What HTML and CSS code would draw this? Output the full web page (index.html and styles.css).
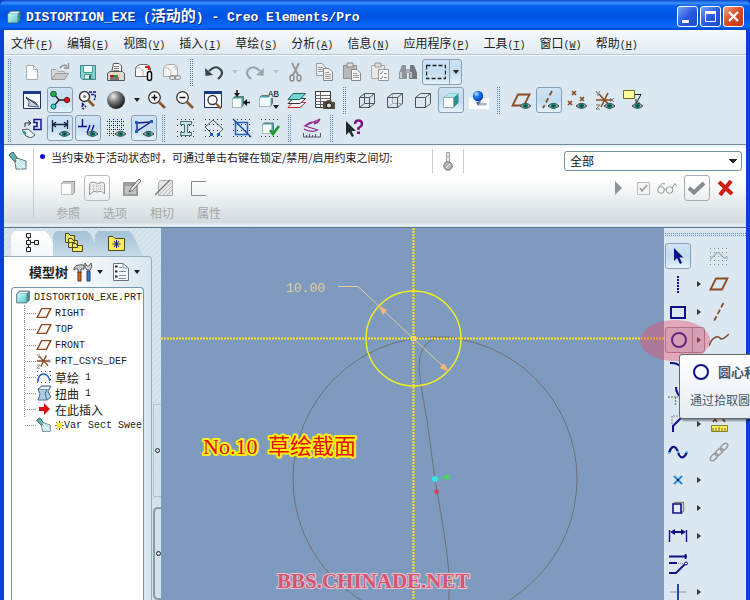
FILE: index.html
```html
<!DOCTYPE html>
<html lang="zh-CN">
<head>
    <meta charset="UTF-8">
    <meta name="viewport" content="width=device-width, initial-scale=1.0">
    <title>DISTORTION_EXE (活动的) - Creo Elements/Pro</title>
    <link rel="stylesheet" href="styles.css">
</head>
<body>
    <!-- shared shapes -->
    <svg class="defs" width="0" height="0" aria-hidden="true">
        <defs>
            <linearGradient id="cubeFace" x1="0" y1="0" x2="1" y2="1"><stop offset="0" stop-color="#c8fffb"/><stop offset="1" stop-color="#5cc4c4"/></linearGradient>
            <radialGradient id="ballGray" cx=".35" cy=".3" r=".75"><stop offset="0" stop-color="#eee"/><stop offset=".45" stop-color="#777"/><stop offset="1" stop-color="#111"/></radialGradient>
            <radialGradient id="ballBlue" cx=".35" cy=".3" r=".75"><stop offset="0" stop-color="#bfe4ff"/><stop offset=".4" stop-color="#1a78f0"/><stop offset="1" stop-color="#0036a8"/></radialGradient>
            <symbol id="eye" viewBox="0 0 12 8"><path d="M0 4Q6 -2 12 4Q6 9 0 4Z" fill="#9fb5b5" stroke="#334"/><circle cx="6" cy="4" r="3" fill="#14806e"/><circle cx="6" cy="4" r="1.2" fill="#023"/></symbol>
            <symbol id="plane" viewBox="0 0 20 20"><path d="M7 4.500H18.500L13 15.500H1.500Z" fill="none" stroke="#8b4a22" stroke-width="1.800"/></symbol>
            <symbol id="cube" viewBox="0 0 20 20"><path d="M1 5.500L5 1.500H19V14.500L15 18.500H1Z" fill="#3f8f95"/><path d="M2 5L5.500 2H18.500L15 5Z" fill="#eafffd"/><path d="M1 5.500H15V18.500H1Z" fill="url(#cubeFace)"/><path d="M1 5.500L5 1.500H19V14.500L15 18.500H1Z" fill="none" stroke="#456"/></symbol>
            <symbol id="axis" viewBox="0 0 20 20"><path d="M14.500 1L5 19" stroke="#8b4a22" stroke-width="1.800" stroke-dasharray="5 2.500"/></symbol>
            <symbol id="csys" viewBox="0 0 20 20"><path d="M1 10H17M4 4L15 16M13 3L6 17" stroke="#8b4a22" stroke-width="1.600"/><path d="M1 1L3 4L5 1M3 4V6M15 8L19 12M19 8L15 12M1 15H5L1 19H5" fill="none" stroke="#777"/></symbol>
            <symbol id="sweep" viewBox="0 0 20 20"><path d="M1 4L5 1L9 7L18 10V18H8L7 11Z" fill="#c4ecec" stroke="#678"/><path d="M1 4L5 1L9 7L7 11Z" fill="#62b5b5" stroke="#466"/><path d="M8 8L17 17M8 12L13 18" stroke="#fff"/></symbol>
        </defs>
    </svg>

    <header class="titlebar">
        <svg width="14" height="14"><use href="#cube"/></svg>
        <h1>DISTORTION_EXE (<span class="cn">活动的</span>) - Creo Elements/Pro</h1>
        <div class="window-buttons">
            <button type="button" class="wbtn" aria-label="最小化"><svg width="19" height="19"><path d="M4 13H11V16H4Z" fill="#fff"/></svg></button>
            <button type="button" class="wbtn" aria-label="最大化"><svg width="19" height="19"><path d="M4.500 5.500H14.500V14.500H4.500Z" fill="none" stroke="#fff"/><path d="M4 4H15V7H4Z" fill="#fff"/></svg></button>
            <button type="button" class="wbtn close" aria-label="关闭"><svg width="19" height="19"><path d="M5 5L14 14M14 5L5 14" stroke="#fff" stroke-width="2.400"/></svg></button>
        </div>
    </header>

    <div class="frame">
        <nav class="menu">
            <a href="#">文件<span>(<u>F</u>)</span></a>
            <a href="#">编辑<span>(<u>E</u>)</span></a>
            <a href="#">视图<span>(<u>V</u>)</span></a>
            <a href="#">插入<span>(<u>I</u>)</span></a>
            <a href="#">草绘<span>(<u>S</u>)</span></a>
            <a href="#">分析<span>(<u>A</u>)</span></a>
            <a href="#">信息<span>(<u>N</u>)</span></a>
            <a href="#">应用程序<span>(<u>P</u>)</span></a>
            <a href="#">工具<span>(<u>T</u>)</span></a>
            <a href="#">窗口<span>(<u>W</u>)</span></a>
            <a href="#">帮助<span>(<u>H</u>)</span></a>
        </nav>

        <div class="toolbars">
            <div class="bar">
                <i class="grip"></i>
                <button type="button" class="tool" aria-label="新建"><svg width="20" height="20"><path d="M4.500 3.500H11.500L15.500 7.500V17.500H4.500Z" fill="#fafafa" stroke="#a9b0b5"/><path d="M11.500 3.500V7.500H15.500" fill="none" stroke="#a9b0b5"/></svg></button>
                <button type="button" class="tool" aria-label="打开"><svg width="20" height="20"><path d="M1.500 17V7.500H6L8 9.500H14.500V11" fill="#dadada" stroke="#a5a5a5"/><path d="M1.500 17.500L5.500 11.500H18.500L14.500 17.500Z" fill="#c9c9c9" stroke="#999"/><path d="M10 6Q13 2 17 4M18.500 1V6H14" fill="none" stroke="#8d8d8d" stroke-width="1.400"/></svg></button>
                <button type="button" class="tool" aria-label="保存"><svg width="20" height="20"><path d="M2.500 3.500H17.500V17.500H4.500L2.500 15.500Z" fill="#7fd8d2" stroke="#3e8587"/><path d="M5.500 4V10.500H14.500V4" fill="#f4fdfd" stroke="#4d9696"/><path d="M6.500 12.500H14V17H6.500Z" fill="#e4f4f4" stroke="#4d9696"/><path d="M11 13H13V17H11Z" fill="#2b6666"/></svg></button>
                <button type="button" class="tool" aria-label="打印"><svg width="20" height="20"><path d="M7.500 1.500H13L15.500 4V11H5.500Z" fill="#fff" stroke="#555"/><path d="M8 4.500H13M8 6.500H13M7.500 8.500H13" stroke="#777"/><path d="M1.500 11.500L4 9.500H16.500L18.500 11.500V18.500H1.500Z" fill="#dedbcc" stroke="#555"/><path d="M4 15H13V18H4Z" fill="#777"/><path d="M4 14H8" stroke="#d01515" stroke-width="2"/><path d="M8 14H12" stroke="#2a9a2a" stroke-width="2"/></svg></button>
                <button type="button" class="tool" aria-label="发送"><svg width="20" height="20"><path d="M1.500 14.500V7Q2 2.500 8 2.500H12Q16.500 3 16.500 8V14.500Z" fill="#f7f7f7" stroke="#666"/><path d="M1.500 7.500Q6 3 9 9.500V14" fill="none" stroke="#bbb"/><path d="M11 5H15V8" fill="none" stroke="#d02020" stroke-width="2"/><rect x="13.500" y="9.500" width="4" height="9" rx="2" fill="#fff" stroke="#000" stroke-width="1.500"/></svg></button>
                <button type="button" class="tool" aria-label="发送链接"><svg width="20" height="20"><path d="M1.500 14.500V7Q2 2.500 8 2.500H12Q15.500 3 15.500 8V14.500Z" fill="#f4f4f4" stroke="#aaa"/><path d="M1.500 7.500Q6 3 9 9.500V14M11 5H14V8" fill="none" stroke="#bbb"/><rect x="7.500" y="13.500" width="6" height="4" rx="2" fill="none" stroke="#888"/><rect x="12.500" y="13.500" width="6" height="4" rx="2" fill="none" stroke="#888"/></svg></button>
                <i class="grip"></i>
                <button type="button" class="tool" aria-label="撤销"><svg width="20" height="20"><path d="M5 9Q12 2 17 8Q20 12 14 17" fill="none" stroke="#39434a" stroke-width="2.200"/><path d="M1 6L1.500 14L9 13Z" fill="#39434a"/></svg></button>
                <button type="button" class="drop off" aria-label="撤销列表"></button>
                <button type="button" class="tool" aria-label="重做"><svg width="20" height="20"><path d="M15 9Q8 2 3 8Q0 12 6 17" fill="none" stroke="#9ba4aa" stroke-width="2.200"/><path d="M19 6L18.500 14L11 13Z" fill="#9ba4aa"/></svg></button>
                <button type="button" class="drop off" aria-label="重做列表"></button>
                <button type="button" class="tool" aria-label="剪切"><svg width="20" height="20"><path d="M6 1L12 13M13 1L7 13" stroke="#999" stroke-width="2"/><ellipse cx="6" cy="16" rx="2" ry="3" fill="none" stroke="#888" stroke-width="1.400"/><ellipse cx="13" cy="16" rx="2" ry="3" fill="none" stroke="#888" stroke-width="1.400"/></svg></button>
                <button type="button" class="tool" aria-label="复制"><svg width="20" height="20"><path d="M2.500 1.500H8L11.500 5V13.500H2.500Z" fill="#eee" stroke="#999"/><path d="M4 5.500H9M4 7.500H9M4 9.500H9" stroke="#999"/><path d="M9.500 6.500H15L18.500 10V18.500H9.500Z" fill="#f5f5f5" stroke="#888"/><path d="M11 10.500H15M11 12.500H17M11 14.500H17M11 16.500H17" stroke="#999"/></svg></button>
                <button type="button" class="tool" aria-label="粘贴"><svg width="20" height="20"><path d="M1.500 3.500H14.500V16.500H1.500Z" fill="#b9b9b9" stroke="#8f8f8f"/><path d="M5 1H11V5H5Z" fill="#ddd" stroke="#888"/><path d="M9.500 7.500H15L18.500 11V18.500H9.500Z" fill="#f5f5f5" stroke="#888"/><path d="M11 11.500H15M11 13.500H17M11 15.500H17" stroke="#999"/></svg></button>
                <button type="button" class="tool" aria-label="选择性粘贴"><svg width="20" height="20"><path d="M1.500 3.500H14.500V16.500H1.500Z" fill="#e8e8e8" stroke="#aaa"/><path d="M5 1H11V5H5Z" fill="#ddd" stroke="#999"/><path d="M8.500 7.500H18.500V18.500H8.500Z" fill="#f8f8f8" stroke="#999"/><path d="M10 11L11 12L13 9M10 16L11 17L13 14M14 11.500H17M14 15.500H17" fill="none" stroke="#888"/></svg></button>
                <button type="button" class="tool" aria-label="查找"><svg width="20" height="20"><path d="M4 3H8V7L9 9V17H1V11Z" fill="#8e9498"/><path d="M16 3H12V7L11 9V17H19V11Z" fill="#72787c"/><path d="M8 7H12V11H8Z" fill="#aab"/><path d="M3 10V16M13 10V16" stroke="#d8dcdf" stroke-width="1.500"/></svg></button>
                <span class="split pressed"><button type="button" class="tool" aria-label="框选"><svg width="20" height="20"><path d="M.5 3.500H19.500V16.500H.5Z" fill="none" stroke="#222" stroke-width="1.300" stroke-dasharray="4 2"/></svg></button><button type="button" class="drop" aria-label="选择方式"></button></span>
            </div>

            <div class="bar">
                <i class="grip"></i>
                <button type="button" class="tool" aria-label="草绘视图"><svg width="20" height="20"><path d="M1.500 1.500H18.500V18.500H1.500Z" fill="#f2fafd" stroke="#1c2f66"/><path d="M1 1H19V4H1Z" fill="#1b3a86"/><path d="M4 8L13 12L17 17L6 16Q9 12 4 8" fill="#b9dcec" stroke="#557"/><path d="M4 7L15 15" stroke="#223"/></svg></button>
                <button type="button" class="tool pressed" aria-label="旋转中心"><svg width="20" height="20"><path d="M4 4L9 10L4 16M9 10H16" fill="none" stroke="#222" stroke-width="1.300"/><circle cx="3.500" cy="4" r="2.800" fill="#1fae3c" stroke="#154"/><circle cx="3.500" cy="16.500" r="2.500" fill="#35d4d8" stroke="#155"/><circle cx="17" cy="10" r="2.600" fill="#e01818" stroke="#611"/></svg></button>
                <button type="button" class="tool" aria-label="重定向"><svg width="20" height="20"><circle cx="6.500" cy="6.500" r="5" fill="#fff" stroke="#333" stroke-width="1.400"/><circle cx="6.500" cy="6.500" r="1.500" fill="#777"/><path d="M10 10L16 16" stroke="#8b5a2b" stroke-width="2.600"/><path d="M11 2H18M13 4.500H17Q18 8 16 10M4 13L8 17M5 14Q3 18 6 19" fill="none" stroke="#15158a" stroke-width="1.500" stroke-dasharray="3 1"/></svg></button>
                <button type="button" class="tool" aria-label="外观库"><svg width="20" height="20"><circle cx="10" cy="10" r="9" fill="url(#ballGray)"/></svg></button>
                <button type="button" class="drop" aria-label="外观列表"></button>
                <button type="button" class="tool" aria-label="放大"><svg width="20" height="20"><circle cx="7.500" cy="7.500" r="5.800" fill="#fff" stroke="#333" stroke-width="1.300"/><path d="M7.500 4.500V10.500M4.500 7.500H10.500" stroke="#111" stroke-width="1.500"/><path d="M12 12L18 18" stroke="#8b5a2b" stroke-width="2.600"/></svg></button>
                <button type="button" class="tool" aria-label="缩小"><svg width="20" height="20"><circle cx="7.500" cy="7.500" r="5.800" fill="#fff" stroke="#333" stroke-width="1.300"/><path d="M4.500 7.500H10.500" stroke="#111" stroke-width="1.500"/><path d="M12 12L18 18" stroke="#8b5a2b" stroke-width="2.600"/></svg></button>
                <button type="button" class="tool" aria-label="重新调整"><svg width="20" height="20"><path d="M1.500 1.500H18.500V17.500H1.500Z" fill="#f6fbfd" stroke="#1c2f66"/><path d="M1 1H19V4H1Z" fill="#1b3a86"/><circle cx="9.500" cy="10" r="4.500" fill="#fff" stroke="#333" stroke-width="1.300"/><path d="M13 13.500L18 18.500" stroke="#8b5a2b" stroke-width="2.200"/></svg></button>
                <button type="button" class="tool" aria-label="定向模式"><svg width="20" height="20"><path d="M1.500 8.500L4 6.500H12.500V15L10.500 17.500H1.500Z" fill="#3fa099" stroke="#677"/><path d="M1.500 8.500H10.500V17.500H1.500Z" fill="#f4fffd"/><path d="M6 0V4M19 12.500H15" stroke="#111" stroke-width="1.500"/><path d="M3 3H9L6 7ZM16 9V16L12 12.500Z" fill="#111"/></svg></button>
                <button type="button" class="tool" aria-label="命名视图"><svg width="20" height="20"><path d="M.5 7.500L3 5.500H13.500V13L11.500 16.500H.5Z" fill="#4aa7a5" stroke="#677"/><path d="M.5 7.500H11.500V16.500H.5Z" fill="#f2fcfc"/><path d="M9 0H20V8H9Z" fill="#dbe8f2"/><text x="9" y="7" class="ab">AB</text><path d="M14 15H20L17 19Z" fill="#222"/></svg></button>
                <button type="button" class="tool" aria-label="层"><svg width="20" height="20"><path d="M6 12.500H18.500L13 17.500H1Z" fill="#fff" stroke="#c22"/><path d="M6 8.500H18.500L13 13.500H1Z" fill="#fff" stroke="#333"/><path d="M6 3.500H18.500L13 9.500H1Z" fill="#6fd6d3" stroke="#265"/></svg></button>
                <button type="button" class="tool" aria-label="视图管理器"><svg width="20" height="20"><path d="M.5 1.500H15.500V17.500H.5Z" fill="#fff" stroke="#333"/><path d="M0 5.500H15M0 8.500H15M0 11.500H15M0 14.500H15M5.500 2V17" stroke="#666"/><path d="M8 12H11L12 10H16L17 12H20V19H8Z" fill="#554b3a"/><circle cx="14" cy="15.500" r="2.600" fill="#ddd" stroke="#111"/></svg></button>
                <i class="grip"></i>
                <button type="button" class="tool" aria-label="线框"><svg width="20" height="20"><path d="M2.500 7.500H12.500V17.500H2.500ZM7.500 3.500H17.500V13.500H7.500ZM2.500 7.500L7.500 3.500M12.500 7.500L17.500 3.500M12.500 17.500L17.500 13.500M2.500 17.500L7.500 13.500" fill="none" stroke="#4f5357"/></svg></button>
                <button type="button" class="tool" aria-label="隐藏线"><svg width="20" height="20"><path d="M7.500 4V13.500H17M2.500 17.500L7.500 13.500" fill="none" stroke="#aaa"/><path d="M2.500 7.500H12.500V17.500H2.500ZM2.500 7.500L7.500 3.500H17.500L12.500 7.500M17.500 3.500V13.500L12.500 17.500" fill="none" stroke="#4f5357"/></svg></button>
                <button type="button" class="tool" aria-label="消隐"><svg width="20" height="20"><path d="M2.500 7.500H12.500V17.500H2.500ZM2.500 7.500L7.500 3.500H17.500L12.500 7.500M17.500 3.500V13.500L12.500 17.500" fill="none" stroke="#4f5357"/></svg></button>
                <button type="button" class="tool pressed" aria-label="着色"><svg width="20" height="20"><path d="M2.500 7.500L7.500 3.500H17.500V13L12.500 17.500H2.500Z" fill="#2d8f92"/><path d="M3 7.500L7.500 3.500H17.500L12.500 7.500Z" fill="#a8ecea"/><path d="M2.500 7.500H12.500V17.500H2.500Z" fill="#fff" stroke="#9ab"/></svg></button>
                <button type="button" class="tool" aria-label="增强的真实感"><svg width="20" height="20"><path d="M0 8H20V19H0Z" fill="#fff"/><ellipse cx="13" cy="14" rx="5" ry="1.500" fill="#aab4c4"/><circle cx="9" cy="6" r="5.200" fill="url(#ballBlue)"/><path d="M7 12L12 11L9 16Z" fill="#5b6f95"/></svg></button>
                <i class="grip"></i>
                <button type="button" class="tool" aria-label="平面显示"><svg width="20" height="20"><use href="#plane" width="20" height="20"/><use href="#eye" x="9" y="12" width="11" height="8"/></svg></button>
                <button type="button" class="tool pressed" aria-label="轴显示"><svg width="20" height="20"><path d="M13 1L4 18" stroke="#8b4a22" stroke-width="1.800" stroke-dasharray="5 3"/><use href="#eye" x="9" y="12" width="11" height="8"/></svg></button>
                <button type="button" class="tool" aria-label="点显示"><svg width="20" height="20"><path d="M5 1L9 5M9 1L5 5M1 11L5 15M5 11L1 15M13 7L17 11M17 7L13 11" stroke="#8b4a22" stroke-width="1.600"/><use href="#eye" x="9" y="12" width="11" height="8"/></svg></button>
                <button type="button" class="tool" aria-label="坐标系显示"><svg width="20" height="20"><use href="#csys" width="20" height="20"/><use href="#eye" x="9" y="12" width="11" height="8"/></svg></button>
                <button type="button" class="tool" aria-label="注释显示"><svg width="20" height="20"><path d="M0.500 .5H11.500V8.500H0.500Z" fill="#ffffa0" stroke="#6d6b20"/><path d="M12 4.500H18L14 12M13 9V13H17" fill="none" stroke="#222"/><use href="#eye" x="9" y="12" width="11" height="8"/></svg></button>
            </div>

            <div class="bar">
                <i class="grip"></i>
                <button type="button" class="tool" aria-label="草绘方向"><svg width="20" height="20"><path d="M12 1.500H19V11.500H12V8.500H15V4.500H12Z" fill="none" stroke="#14148a" stroke-width="1.500"/><path d="M3 9V5H8M6 2.500L9 5L6 7.500" fill="none" stroke="#222"/><path d="M0 12L6 11L13 17L9 20L4 18Z" fill="#e6f6f4" stroke="#555"/><path d="M0 12L4 18V14Z" fill="#28928a"/></svg></button>
                <button type="button" class="tool pressed" aria-label="显示尺寸"><svg width="20" height="20"><path d="M2.500 2V14M17.500 2V11M3 6.500H17M6 4L3 6.500L6 9M14 4L17 6.500L14 9" fill="none" stroke="#14243e" stroke-width="1.300"/><use href="#eye" x="9" y="12" width="11" height="8"/></svg></button>
                <button type="button" class="tool pressed" aria-label="显示约束"><svg width="20" height="20"><path d="M4.500 1V8M0 8.500H9M9 15L12 7M13 15L16 7" fill="none" stroke="#14148a" stroke-width="1.400"/><use href="#eye" x="9" y="12" width="11" height="8"/></svg></button>
                <button type="button" class="tool" aria-label="显示栅格"><svg width="20" height="20"><path d="M1 3.500H18M1 7.500H18M1 11.500H18M1 15.500H10M3.500 1V18M7.500 1V18M11.500 1V13M15.500 1V12" stroke="#14148a" stroke-dasharray="1 1"/><use href="#eye" x="9" y="12" width="11" height="8"/></svg></button>
                <button type="button" class="tool pressed" aria-label="显示顶点"><svg width="20" height="20"><path d="M3 5L17 4L3 13Z" fill="none" stroke="#14148a" stroke-width="1.300"/><path d="M1 3H4V6H1ZM16 2H19V5H16ZM1 12H4V15H1Z" fill="#1f5fbf"/><use href="#eye" x="9" y="12" width="11" height="8"/></svg></button>
                <i class="grip"></i>
                <button type="button" class="tool" aria-label="着色封闭环"><svg width="20" height="20"><path d="M1 1.500H19M1 7.500H19M1 13.500H19M1 18.500H19" stroke="#334" stroke-dasharray="1 3"/><path d="M4.500 3.500H15.500V6.500H11.500V14.500H15.500V17.500H4.500V14.500H8.500V6.500H4.500Z" fill="#c6e8e2" stroke="#567"/></svg></button>
                <button type="button" class="tool" aria-label="加亮开放端"><svg width="20" height="20"><path d="M1 1.500H19M1 6.500H19M1 12.500H19M1 18.500H19" stroke="#334" stroke-dasharray="1 3"/><path d="M7 15L1 9L9 2L19 11L14 16" fill="none" stroke="#556"/><path d="M6 15H9V18H6ZM13 15H16V18H13Z" fill="#1f5fbf"/></svg></button>
                <button type="button" class="tool" aria-label="重叠几何"><svg width="20" height="20"><path d="M1 1.500H19M1 6.500H19M1 12.500H19M1 18.500H19" stroke="#334" stroke-dasharray="1 3"/><path d="M3.500 4.500H15.500V16.500H3.500Z" fill="none" stroke="#1f5fbf" stroke-width="1.500"/><path d="M1 1L19 19" stroke="#1748a8" stroke-width="1.500"/></svg></button>
                <button type="button" class="tool" aria-label="特征要求"><svg width="20" height="20"><path d="M1 1.500H19M1 18.500H19" stroke="#334" stroke-dasharray="1 3"/><path d="M2.500 6.500L4 5H13.500V13L11.500 15.500H2.500Z" fill="#48a6a2" stroke="#677"/><path d="M2.500 6.500H11.500V15.500H2.500Z" fill="#f3fffd"/><path d="M10 12L13 16L19 8" fill="none" stroke="#1a9a28" stroke-width="2.600"/></svg></button>
                <i class="grip"></i>
                <button type="button" class="tool" aria-label="分析"><svg width="20" height="20"><path d="M18 1L3 8L16 12M3 8Q10 2 16 5M2 11Q9 15 16 12M18 1Q16 5 12 6" fill="none" stroke="#92268f" stroke-width="1.300"/><path d="M1.500 15V19H18.500V15M4.500 17V19M7.500 16V19M10.500 17V19M13.500 16V19" fill="none" stroke="#556"/></svg></button>
                <i class="grip"></i>
                <button type="button" class="tool" aria-label="上下文帮助"><svg width="20" height="20"><path d="M2 3V17L5 14L8 19L10 18L7.500 13H12Z" fill="#22282c"/><path d="M11 6Q11 2.500 14.500 2.500Q18 2.500 18 6Q18 8 14.500 10V12" fill="none" stroke="#7b1280" stroke-width="2.400"/><path d="M13 13.500H16V16H13Z" fill="#7b1280"/></svg></button>
            </div>
        </div>

        <section class="dash">
            <div class="dash-icon"><svg width="20" height="20"><use href="#sweep"/></svg></div>
            <div class="dash-main">
                <div class="message-row">
                    <p class="message">当约束处于活动状态时，可通过单击右键在锁定/禁用/启用约束之间切:</p>
                    <div class="gauge"><svg width="12" height="20"><path d="M4.500 1.500H7.500V12H4.500Z" fill="#e4e4e4" stroke="#aaa"/><path d="M4.500 5.500H8" stroke="#aaa"/><circle cx="6" cy="15" r="4.200" fill="#b5b5b5" stroke="#777"/><path d="M4 17L8 13" stroke="#eee"/></svg></div>
                </div>
                <div class="dash-tools">
                    <button type="button" class="tool" aria-label="实体"><svg width="20" height="20"><path d="M3.500 5.500L5.500 3.500H16.500V14.500L14.500 16.500H3.500Z" fill="#ccc" stroke="#999"/><path d="M3.500 5.500H13.500V16.500H3.500Z" fill="#fafafa" stroke="#c4c4c4"/></svg></button>
                    <button type="button" class="tool boxed" aria-label="曲面"><svg width="20" height="20"><path d="M2.500 17V7Q2.500 4 6 4Q11 7 15 4Q17.500 4 17.500 7V16Q15 12 10 14Q6 12 2.500 17Z" fill="#f0f0f0" stroke="#999"/><path d="M3 8H17M3 11H17M6.500 4V13M10 6V14M13.500 5V13" stroke="#bbb" stroke-dasharray="1 1"/></svg></button>
                    <button type="button" class="tool edit" aria-label="编辑截面"><svg width="20" height="20"><path d="M1 4H16V18H1Z" fill="#9c9c9c"/><path d="M3 8H14V16H3Z" fill="#c4c4c4"/><path d="M7 14L9 10L17 1L19 3L11 12Z" fill="#eee" stroke="#666"/></svg></button>
                    <button type="button" class="tool" aria-label="移除材料"><svg width="20" height="20"><path d="M4.500 4.500L6.500 2.500H18.500V17.500H4.500Z" fill="#e5e5e5" stroke="#aaa"/><path d="M5 17L18 4M9 17L18 8M13 17L18 12" stroke="#bbb"/><path d="M1 17L16 2" stroke="#777" stroke-width="1.300"/></svg></button>
                    <button type="button" class="tool thin" aria-label="薄板"><svg width="20" height="20"><path d="M18 3.500H3.500V17.500H18" fill="none" stroke="#8a8a8a"/></svg></button>
                </div>
                <div class="dash-tabs">
                    <button type="button">参照</button>
                    <button type="button">选项</button>
                    <button type="button">相切</button>
                    <button type="button">属性</button>
                </div>
            </div>
            <div class="dash-side">
                <select class="filter" aria-label="过滤器">
                    <option>全部</option>
                </select>
                <div class="confirm">
                    <button type="button" class="play" aria-label="继续"><svg width="9" height="16"><path d="M1 1L8 8L1 15Z" fill="#8c9296"/></svg></button>
                    <button type="button" aria-label="预览开关"><svg width="13" height="13"><path d="M.5 .5H12.500V12.500H.500Z" fill="#f4f4f4" stroke="#bbb"/><path d="M3 6L5 9L10 3" fill="none" stroke="#999" stroke-width="1.500"/></svg></button>
                    <button type="button" aria-label="预览"><svg width="20" height="14"><circle cx="4" cy="9" r="3.300" fill="none" stroke="#999"/><circle cx="12.500" cy="9" r="3.300" fill="none" stroke="#999"/><path d="M7 8H9M2 6Q5 1 8 3M15 7L18 2.500L19.500 5" fill="none" stroke="#999"/></svg></button>
                    <button type="button" class="accept" aria-label="确定"><svg width="18" height="14"><path d="M1 7L6 11.500L16 2" fill="none" stroke="#858b8e" stroke-width="4"/></svg></button>
                    <button type="button" class="cancel" aria-label="取消"><svg width="17" height="16"><path d="M2 2L15 14M14 1L3 15" stroke="#d01c10" stroke-width="4"/></svg></button>
                </div>
            </div>
        </section>

        <main class="work">
            <aside class="side">
                <div class="tabs">
                    <button type="button" class="tab active" aria-label="模型树"><svg width="16" height="20"><path d="M2.500 .5H6.500V4.500H2.500ZM2.500 7.500H6.500V11.500H2.500ZM2.500 14.500H6.500V18.500H2.500ZM10.500 7.500H14.500V11.500H10.500ZM4.500 4.500V7.500M4.500 11.500V14.500M6.500 9.500H10.500" fill="none" stroke="#222"/></svg></button>
                    <button type="button" class="tab" aria-label="文件夹浏览器"><svg width="20" height="20"><path d="M1.500 .5H5L6 2.500H10.500V9.500H1.500ZM4.500 5.500H8L9 7.500H13.500V14.500H4.500ZM8.500 10.500H12L13 12.500H18.500V18.500H8.500Z" fill="#f4e95e" stroke="#4d4a20"/></svg></button>
                    <button type="button" class="tab" aria-label="收藏夹"><svg width="20" height="18"><path d="M2.500 2.500H7L9 4.500H18.500V16.500H2.500Z" fill="#f7ee5e" stroke="#4d4a20"/><path d="M10.500 6V14M6.500 10H14.500M8 7L13 13M13 7L8 13" stroke="#15158a"/></svg></button>
                </div>
                <div class="panel">
                    <div class="panel-head">
                        <h2>模型树</h2>
                        <button type="button" class="head-tool" aria-label="设置"><svg width="20" height="20"><path d="M1 6Q3 2 11 3V7H8V11H5V7Q3 6 1 8Z" fill="#c7ccd0" stroke="#555"/><path d="M5 10H8V19H5Z" fill="#d96a1b" stroke="#6b3410"/><path d="M14 9H17V19H14Z" fill="#3c79bf" stroke="#24406b"/><path d="M12 1Q11 6 14 8H17Q20 5 18 1L16 4L14 4Z" fill="#d8dcdf" stroke="#555"/></svg></button>
                        <button type="button" class="drop" aria-label="设置菜单"></button>
                        <button type="button" class="head-tool" aria-label="显示"><svg width="18" height="20"><path d="M1.500 1.500H11L16.500 6V18.500H1.500Z" fill="#f7fafc" stroke="#6a7479"/><path d="M11 1.500V6H16.500M7 9.500H14M7 13.500H14M7 5.500H10M7 16.500H14" fill="none" stroke="#7894ad"/><path d="M3 4.500H5.500M3 9.500H5.500M3 14.500H5.500" stroke="#222" stroke-width="2"/></svg></button>
                        <button type="button" class="drop" aria-label="显示菜单"></button>
                    </div>
                    <div class="tree">
                        <div class="root"><svg width="14" height="14"><use href="#cube"/></svg>DISTORTION_EXE.PRT</div>
                        <ul>
                            <li><svg width="16" height="16"><use href="#plane"/></svg>RIGHT</li>
                            <li><svg width="16" height="16"><use href="#plane"/></svg>TOP</li>
                            <li><svg width="16" height="16"><use href="#plane"/></svg>FRONT</li>
                            <li><svg width="16" height="16"><use href="#csys"/></svg>PRT_CSYS_DEF</li>
                            <li><svg width="16" height="14"><path d="M1 1.500H15M1 12.500H15M1.500 1V13M14.500 1V13" stroke="#567" stroke-dasharray="1 3"/><path d="M2 12Q2 4 8 4Q12 4 14 11" fill="none" stroke="#1c5fc0" stroke-width="1.500"/></svg><span class="cn">草绘</span>&nbsp;1</li>
                            <li><svg width="16" height="16"><path d="M2 4L6 1H15L12 7L15 12L11 15H2L4 9Z" fill="#a9cfe8" stroke="#4f6a80"/><path d="M2 4H11L9 9L11 15" fill="none" stroke="#4f6a80"/><path d="M3 4L6 2H14L11 4Z" fill="#f4fbff"/></svg><span class="cn">扭曲</span>&nbsp;1</li>
                            <li><svg width="16" height="14"><path d="M3 5H8V1L14 7L8 13V9H3Z" fill="#d01414"/></svg><span class="cn">在此插入</span></li>
                            <li><svg width="16" height="16"><use href="#sweep"/></svg><svg class="star" width="9" height="9"><path d="M4.500 0V9M0 4.500H9M1 1L8 8M8 1L1 8" stroke="#777a10"/><path d="M2 2H7V7H2Z" fill="#ffef20"/></svg>Var Sect Swee</li>
                        </ul>
                    </div>
                </div>
            </aside>

            <div class="sashes">
                <div class="sash"></div>
                <div class="sash deep"></div>
            </div>

            <div class="canvas">
                <svg width="100%" height="100%">
                    <g fill="none" stroke="#6d7076">
                        <circle cx="274" cy="251" r="142"/>
                        <path d="M296 110Q278 107 269 113Q258 120 258 139Q259 155 266 192L274 251L281 292Q288 335 288 352V372"/>
                    </g>
                    <path d="M252.500 0V1000M0 110.500H1000" stroke="#ffe21a" stroke-width="2" stroke-dasharray="2 1"/>
                    <circle cx="252.500" cy="110.500" r="47.500" fill="none" stroke="#f4f01c" stroke-width="1.400"/>
                    <path d="M177 58.500H197L286 142" fill="none" stroke="#e3cd96"/>
                    <path d="M217 77L226 82L222 87ZM288 144L279 140L283 135Z" fill="#efb878"/>
                    <path d="M250.500 108.500H254.500V112.500H250.500Z" fill="none" stroke="#f5ee30"/>
                    <path d="M274 251L286 249" stroke="#3fdc5c"/>
                    <circle cx="274" cy="251" r="3" fill="#34e4ea"/>
                    <circle cx="286" cy="249" r="2.500" fill="#45dc52"/>
                    <circle cx="275.500" cy="263.500" r="2.300" fill="#d1405c"/>
                    <text class="dim" x="125" y="64">10.00</text>
                    <text class="step" x="42" y="226">No.10</text>
                    <text class="step" x="107" y="226">草绘截面</text>
                    <text class="mark" x="116" y="360">BBS.CHINADE.NET</text>
                </svg>
            </div>

            <aside class="sketch">
                <i class="hgrip"></i>
                <div class="palette">
                    <button type="button" class="tool pressed" aria-label="选择"><svg width="20" height="20"><path d="M6 2V15L9 12L12 18L14 17L11.500 11.500H15.500Z" fill="#10108c"/></svg></button><span></span>
                    <button type="button" class="tool" aria-label="样条栅格"><svg width="20" height="20"><path d="M1 2.500H19M1 6.500H19M1 10.500H19M1 14.500H19M1 18.500H19" stroke="#8a8f93" stroke-dasharray="1 3"/><path d="M1 13Q3 12 6 9Q9 4 12 9Q15 13 19 12" fill="none" stroke="#a5abb0" stroke-width="1.300"/></svg></button>

                    <button type="button" class="tool" aria-label="中心线"><svg width="20" height="20"><path d="M10 2V19" stroke="#10108c" stroke-width="2" stroke-dasharray="2 1"/></svg></button><button type="button" class="fly" aria-label="更多线"></button>
                    <button type="button" class="tool" aria-label="基准平面"><svg width="20" height="20"><use href="#plane"/></svg></button>

                    <button type="button" class="tool" aria-label="矩形"><svg width="20" height="20"><path d="M3 5H17V16H3Z" fill="none" stroke="#10108c" stroke-width="2"/></svg></button><button type="button" class="fly" aria-label="更多矩形"></button>
                    <button type="button" class="tool" aria-label="基准轴"><svg width="20" height="20"><use href="#axis"/></svg></button>

                    <span class="split circle-tool"><button type="button" class="tool" aria-label="圆"><svg width="20" height="20"><circle cx="10" cy="10" r="7" fill="none" stroke="#10108c" stroke-width="2"/></svg></button><button type="button" class="fly" aria-label="更多圆"></button></span>
                    <button type="button" class="tool" aria-label="基准曲线"><svg width="20" height="20"><path d="M0 16Q2 9 7 7Q10 6 12 9Q15 9 20 4" fill="none" stroke="#7b4a30" stroke-width="1.500"/></svg></button>

                    <button type="button" class="tool" aria-label="弧"><svg width="20" height="20"><path d="M2 5Q12 4 17 14" fill="none" stroke="#10108c" stroke-width="2"/></svg></button><button type="button" class="fly" aria-label="更多弧"></button><span></span>

                    <button type="button" class="tool" aria-label="倒圆角"><svg width="20" height="20"><path d="M8 1Q8 8 14 12" fill="none" stroke="#10108c" stroke-width="2"/><path d="M0 11H10M7.500 11V19" fill="none" stroke="#888" stroke-dasharray="2 1" stroke-width="1.500"/></svg></button><button type="button" class="fly" aria-label="更多圆角"></button><span></span>

                    <button type="button" class="tool" aria-label="倒角"><svg width="20" height="20"><path d="M4 10V2H13" fill="none" stroke="#888" stroke-dasharray="2 1"/><path d="M5 18V12L14 3" fill="none" stroke="#10108c" stroke-width="2"/></svg></button><button type="button" class="fly" aria-label="更多倒角"></button>
                    <button type="button" class="tool" aria-label="参照尺寸"><svg width="20" height="20"><path d="M4 3L8 8M8 3L4 8M13 4L16 8" stroke="#8b4a22" stroke-width="1.600"/><path d="M2.500 11.500H18.500V17.500H2.500Z" fill="#f4ec58" stroke="#88802a"/><path d="M4 14V17M7 14V17M10 13V17M13 14V17M16 14V17" stroke="#77702a"/></svg></button>

                    <button type="button" class="tool" aria-label="样条"><svg width="20" height="20"><path d="M1 11Q4 2 8 6Q10 9 11 13Q15 19 19 10" fill="none" stroke="#10108c" stroke-width="2.200"/><path d="M0 10H2V12H0ZM9 9H11V11H9ZM18 9H20V11H18Z" fill="#4cc8f4"/></svg></button><span></span>
                    <button type="button" class="tool" aria-label="链接"><svg width="20" height="20"><g fill="none" stroke="#999" stroke-width="1.500"><ellipse cx="5" cy="15" rx="4.500" ry="2.500" transform="rotate(-45 5 15)"/><ellipse cx="10" cy="10" rx="4.500" ry="2.500" transform="rotate(-45 10 10)"/><ellipse cx="15" cy="5" rx="4.500" ry="2.500" transform="rotate(-45 15 5)"/></g></svg></button>

                    <button type="button" class="tool" aria-label="点"><svg width="20" height="20"><path d="M6 6L14 14M14 6L6 14" stroke="#2c86dd" stroke-width="2"/><path d="M9 9H11V11H9Z" fill="#124"/></svg></button><button type="button" class="fly" aria-label="更多点"></button><span></span>

                    <button type="button" class="tool" aria-label="使用边"><svg width="20" height="20"><path d="M4.500 6L7.500 4.500H15.500V13L13 15.500" fill="none" stroke="#8a8a6a" stroke-width="1.300"/><path d="M5 6H13V15H5Z" fill="#e6eef4" stroke="#10108c" stroke-width="1.600"/></svg></button><button type="button" class="fly" aria-label="更多边"></button><span></span>

                    <button type="button" class="tool" aria-label="尺寸"><svg width="20" height="20"><path d="M1.500 4V16M18.500 4V16" stroke="#10108c" stroke-width="1.400"/><path d="M4 6H16" stroke="#10108c" stroke-width="2"/><path d="M2 6L7 3V9ZM18 6L13 3V9Z" fill="#10108c"/></svg></button><button type="button" class="fly" aria-label="更多尺寸"></button><span></span>

                    <button type="button" class="tool" aria-label="修改"><svg width="20" height="20"><path d="M1 2.500H19M17.500 0V5M1 9H9M1 19H8L17 10" fill="none" stroke="#10108c" stroke-width="1.800"/><path d="M10 9.500H16" stroke="#888" stroke-dasharray="1 1"/><circle cx="18" cy="9.500" r="1.500" fill="#fff" stroke="#10108c"/></svg></button><span></span><span></span>

                    <button type="button" class="tool" aria-label="约束"><svg width="20" height="20"><path d="M2 10H18" stroke="#a8adb2" stroke-width="1.500"/><path d="M10 2V20" stroke="#123a80" stroke-width="1.800"/></svg></button><button type="button" class="fly" aria-label="更多约束"></button><span></span>
                </div>
                <div class="halo"></div>
                <div class="tip" role="tooltip">
                    <strong><svg width="18" height="18"><circle cx="9" cy="9" r="7" fill="none" stroke="#10108c" stroke-width="2"/></svg>圆心和</strong>
                    <p>通过拾取圆</p>
                </div>
            </aside>
        </main>
    </div>
</body>
</html>
```
FILE: styles.css
```css
* {
    box-sizing: border-box;
}
body {
    margin: 0;
    height: 100vh;
    overflow: hidden;
    display: flex;
    flex-direction: column;
    background-color: #0a3fd0;
    font-family: "Liberation Mono", "Noto Sans CJK SC", monospace;
    font-size: 10px;
    color: #222;
}
button {
    margin: 0;
    padding: 0;
    border: none;
    background: none;
    font: inherit;
    color: inherit;
}
svg {
    display: block;
    flex: none;
}
p, h1, h2, ul {
    margin: 0;
    padding: 0;
}
.defs {
    position: absolute;
}
.cn {
    font-family: "Noto Sans CJK SC", sans-serif;
    font-size: 12px;
}

/* title bar */
.titlebar {
    flex: none;
    height: 30px;
    padding: 3px 6px 0 7px;
    display: flex;
    align-items: center;
    gap: 5px;
    background: linear-gradient(#0a48c8, #3b90ff 3px, #0560ee 6px, #0052e0 16px, #0468ff 26px, #0048cc);
    border-radius: 6px 6px 0 0;
}
.titlebar h1 {
    flex: 1;
    font-size: 13px;
    line-height: 18px;
    font-weight: bold;
    color: #fff;
    text-shadow: 1px 1px #0a2a80;
    white-space: nowrap;
}
.titlebar .cn {
    font-size: 15px;
    line-height: 18px;
}
.window-buttons {
    display: flex;
    gap: 2px;
}
.wbtn {
    width: 21px;
    height: 21px;
    border: 1px solid #fff;
    border-radius: 3px;
    background: linear-gradient(135deg, #7ba2f5, #2a5be0 50%, #1c4acb);
}
.wbtn.close {
    background: linear-gradient(135deg, #f0a083, #dc4a25 50%, #c23411);
}

.frame {
    flex: 1;
    min-height: 0;
    display: flex;
    flex-direction: column;
    border: solid #0a3fd8;
    border-width: 0 4px;
    background-color: #dbe8f2;
}

/* menu */
.menu {
    flex: none;
    height: 25px;
    display: flex;
    align-items: center;
    gap: 14px;
    padding: 4px 0 0 7px;
    background: linear-gradient(#f8fafc, #dfeaf2);
    border-bottom: 1px solid #b9c8d2;
}
.menu a {
    font-family: "Noto Sans CJK SC", sans-serif;
    font-size: 12px;
    line-height: 20px;
    color: #222;
    text-decoration: none;
    white-space: nowrap;
}
.menu span {
    font-family: "Liberation Mono", monospace;
    font-size: 10px;
}

/* toolbars */
.toolbars {
    flex: none;
    padding: 2px 0 2px 4px;
    border-top: 1px solid #f4f8fb;
    border-bottom: 1px solid #748896;
}
.bar {
    display: flex;
    align-items: center;
    height: 28px;
}
.grip,
.hgrip {
    background: linear-gradient(#dbe8f2 50%, transparent 50%) 0 0 / 2px 2px,
        linear-gradient(90deg, #5c82b4 50%, #dbe8f2 50%) 0 0 / 2px 2px;
}
.grip {
    width: 4px;
    height: 28px;
    margin: 0 6px 0 4px;
}
.grip:first-child {
    margin-left: 0;
}
.tool {
    flex: none;
    width: 28px;
    height: 28px;
    display: flex;
    align-items: center;
    justify-content: center;
}
.pressed {
    border: 1px solid #8aa0b2;
    border-radius: 3px;
    background: linear-gradient(#cfe4f5, #c2dcf0 50%, #e3f2fb);
}
.tool.pressed {
    width: 26px;
    height: 26px;
    margin: 1px;
}
.drop {
    flex: none;
    width: 13px;
    height: 26px;
    display: flex;
    align-items: center;
    justify-content: center;
}
.drop::before {
    content: "";
    border: 3px solid transparent;
    border-top: 4px solid #222;
    border-bottom: none;
}
.drop.off::before {
    border-top-color: #b8c3cb;
}
.split {
    display: flex;
    align-items: center;
    width: 40px;
    height: 26px;
}
.split .tool {
    width: 26px;
    height: 24px;
}
.split .drop {
    width: 12px;
    height: 24px;
    border-left: 1px solid #8aa0b2;
}
.ab {
    font-family: "Liberation Mono", monospace;
    font-size: 9px;
}

/* dashboard */
.dash {
    flex: none;
    height: 83px;
    display: flex;
    padding-top: 3px;
    background: linear-gradient(#e4f3fb, #fff 4px, #fff 34px, #d3dbde 78px, #e4edf2 79px, #dbe8f0);
    border-bottom: 1px solid #5d7080;
}
.dash-icon {
    width: 30px;
    height: 70px;
    padding: 3px 0 0 4px;
    border-right: 1px solid #c8ced2;
}
.dash-main {
    flex: 1;
    min-width: 0;
}
.message-row {
    display: flex;
    align-items: center;
    height: 25px;
    padding-left: 6px;
}
.message {
    flex: 1;
    font-family: "Noto Sans CJK SC", sans-serif;
    font-size: 11px;
    line-height: 16px;
    white-space: nowrap;
    display: flex;
    align-items: center;
    gap: 6px;
    padding-bottom: 8px;
}
.message::before {
    content: "";
    width: 5px;
    height: 5px;
    border-radius: 50%;
    background-color: #0a0ad0;
}
.gauge {
    width: 32px;
    height: 24px;
    margin-right: 100px;
    display: flex;
    align-items: center;
    justify-content: center;
    border: solid #ccc;
    border-width: 0 1px;
}
.dash-tools {
    display: flex;
    gap: 1px;
    padding: 1px 0 0 20px;
}
.dash-tools .edit {
    margin: 0 3px 0 6px;
}
.dash-tools .thin {
    margin-left: 5px;
}
.boxed {
    width: 26px;
    height: 26px;
    margin: 1px;
    border: 1px solid #bbb;
    border-radius: 3px;
}
.dash-tabs {
    display: flex;
    gap: 23px;
    padding: 1px 0 0 22px;
    font-family: "Noto Sans CJK SC", sans-serif;
    font-size: 12px;
    line-height: 20px;
    color: #a3a7a9;
}
.dash-side {
    width: 182px;
    padding: 3px 4px 0 0;
}
.filter {
    display: block;
    width: 100%;
    height: 20px;
    padding: 0 5px;
    border: 1px solid #7494a5;
    border-radius: 3px;
    appearance: none;
    font-family: "Noto Sans CJK SC", sans-serif;
    font-size: 12px;
    line-height: 18px;
    color: #111;
    background: linear-gradient(45deg, transparent 50%, #222 50%) right 8px center / 4px 4px no-repeat,
        linear-gradient(-45deg, transparent 50%, #222 50%) right 4px center / 4px 4px no-repeat, #fff;
}
.confirm {
    display: flex;
    align-items: center;
    justify-content: flex-end;
    gap: 7px;
    padding: 4px 8px 0 0;
}
.play {
    margin-right: 7px;
}
.accept {
    width: 26px;
    height: 26px;
    display: flex;
    align-items: center;
    justify-content: center;
    border: 1px solid #aaa;
    border-radius: 3px;
}

/* work area */
.work {
    flex: 1;
    min-height: 0;
    display: flex;
    background: repeating-linear-gradient(135deg, #cfe0ea 0 2px, #d7e5ee 2px 4px);
}
.side {
    flex: none;
    width: 148px;
    display: flex;
    flex-direction: column;
}
.tabs {
    flex: none;
    height: 28px;
    display: flex;
    padding: 3px 0 0 7px;
}
.tab {
    flex: none;
    width: 48px;
    height: 25px;
    margin-right: -6px;
    padding: 2px 0 4px 11px;
    background: linear-gradient(#a3c1d6, #c8dbe7);
    clip-path: polygon(0 4px, 3px 0, 34px 0, 38px 4px, 100% 100%, 0 100%);
}
.tab.active {
    background: linear-gradient(#fff, #f2f7fa);
    padding-left: 13px;
}
.panel {
    flex: 1;
    min-height: 0;
    display: flex;
    flex-direction: column;
    padding: 0 7px;
    border: solid #98adba;
    border-width: 1px 1px 0 0;
    border-radius: 0 4px 0 0;
    background: linear-gradient(90deg, #fff 40%, #d8e6ef);
}
.panel-head {
    flex: none;
    height: 30px;
    display: flex;
    align-items: center;
    padding-left: 18px;
}
.panel-head h2 {
    flex: none;
    font-family: "Noto Sans CJK SC", sans-serif;
    font-size: 13px;
    line-height: 20px;
    margin-right: 5px;
    white-space: nowrap;
}
.panel-head .drop {
    margin-right: 6px;
}
.panel-head .drop:last-child {
    margin-right: 0;
}
.tree {
    flex: 1;
    min-height: 0;
    padding-top: 1px;
    border: 1px solid #7397ab;
    border-bottom: none;
    border-radius: 4px 4px 0 0;
    background-color: #fff;
    overflow: hidden;
    white-space: nowrap;
}
.root {
    display: flex;
    align-items: center;
    gap: 4px;
    height: 16px;
    padding-left: 4px;
}
.tree ul {
    list-style: none;
    padding-left: 12px;
}
.tree li {
    display: flex;
    align-items: center;
    height: 16px;
    border-left: 1px dotted #999;
}
.tree li::before {
    content: "";
    width: 11px;
    border-top: 1px dotted #999;
}
.tree li > svg:first-of-type {
    margin-right: 3px;
}
.tree li:last-child {
    border-left-color: transparent;
}
.sashes {
    flex: none;
    width: 9px;
    padding-top: 176px;
    padding-left: 1px;
    display: flex;
    flex-direction: column;
    gap: 10px;
}
.sash {
    flex: none;
    height: 93px;
    display: flex;
    align-items: center;
    justify-content: center;
    border: 1px solid #b3c4cf;
    border-right: none;
    background-color: #d3e2eb;
}
.sash::before {
    content: "";
    width: 3px;
    height: 3px;
    border: 1px solid #223;
    border-radius: 50%;
}
.deep {
    border: 2px solid #8b9ba6;
    border-right: none;
    border-radius: 5px 0 0 5px;
}

/* graphics window */
.canvas {
    flex: 1;
    min-width: 0;
    background-color: #7e9bbf;
    overflow: hidden;
}
.dim {
    font-family: "Liberation Mono", monospace;
    font-size: 13px;
    fill: #e3cd96;
}
.step {
    font-family: "Liberation Serif", "Noto Sans CJK SC", serif;
    font-size: 22px;
    fill: #e81010;
    stroke: #ffee10;
    stroke-width: 4px;
    stroke-linejoin: round;
    paint-order: stroke;
}
.mark {
    font-family: "Liberation Serif", serif;
    font-size: 21px;
    font-weight: bold;
    fill: #d4556f;
    stroke: #e6c3d2;
    stroke-width: 2px;
    paint-order: stroke;
}

/* sketcher palette */
.sketch {
    position: relative;
    flex: none;
    width: 82px;
    background-color: #dbe8f2;
}
.hgrip {
    display: block;
    height: 4px;
    margin: 4px 0 6px 1px;
}
.palette {
    display: grid;
    grid-template-columns: 28px 13px 28px;
    grid-auto-rows: 28px;
    align-items: center;
}
.fly {
    height: 26px;
    display: flex;
    align-items: center;
    justify-content: center;
}
.fly::before {
    content: "";
    border: 3px solid transparent;
    border-left: 4px solid #333;
    border-right: none;
}
.circle-tool {
    grid-column: span 2;
    margin-left: 1px;
    border: 1px solid #8e8a9c;
    border-radius: 3px;
    background-color: #c9dbea;
}
.circle-tool .fly {
    width: 12px;
    height: 24px;
    border-left: 1px solid #8e8a9c;
}
.halo {
    position: absolute;
    left: -24px;
    top: 92px;
    width: 70px;
    height: 41px;
    border-radius: 50%;
    background-color: rgba(238, 70, 100, 0.4);
}
.tip {
    position: absolute;
    left: 15px;
    top: 126px;
    width: 90px;
    height: 65px;
    padding: 7px 0 0 10px;
    border: 1px solid #5e6a73;
    border-radius: 3px;
    background: linear-gradient(#fff, #e6ecf2);
    box-shadow: 2px 2px 2px rgba(0, 0, 0, 0.4);
    font-family: "Noto Sans CJK SC", sans-serif;
    font-size: 12px;
    line-height: 20px;
    color: #46586a;
    white-space: nowrap;
}
.tip strong {
    display: flex;
    align-items: center;
    gap: 8px;
    padding-left: 2px;
    font-size: 13px;
}
.tip p {
    margin-top: 8px;
}
```
